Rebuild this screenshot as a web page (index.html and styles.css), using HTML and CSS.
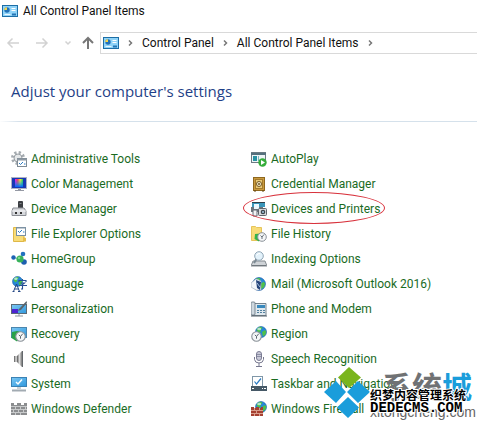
FILE: index.html
```
<!DOCTYPE html>
<html lang="en">
<head>
    <meta charset="utf-8" />
    <title>All Control Panel Items</title>
    <link rel="stylesheet" href="styles.css">
</head>
<body>
    <!--shared shapes-->
    <svg class="defs" aria-hidden="true">
        <defs>
            <linearGradient id="gamut" x1="0" y1="0" x2="1" y2="0">
                <stop offset="0" stop-color="#f0f" /><stop offset=".35" stop-color="#f44" />
                <stop offset=".65" stop-color="#fe3" /><stop offset="1" stop-color="#2c4" />
            </linearGradient>
            <linearGradient id="cool" x1="0" y1="0" x2="0" y2="1">
                <stop offset="0" stop-color="#0bf" stop-opacity="0" /><stop offset="1" stop-color="#06f" />
            </linearGradient>
            <linearGradient id="metal" x1="0" y1="0" x2="1" y2="0">
                <stop offset="0" stop-color="#555" /><stop offset=".5" stop-color="#ddd" /><stop offset="1" stop-color="#777" />
            </linearGradient>
            <linearGradient id="screen" x1="0" y1="0" x2="1" y2="1">
                <stop offset="0" stop-color="#7cc8f4" /><stop offset="1" stop-color="#2f97dc" />
            </linearGradient>
            <symbol id="panel" viewBox="0 0 16 12">
                <rect x=".5" y=".5" width="15" height="11" fill="#8fd3f8" stroke="#1c6ea6" />
                <circle cx="5" cy="5" r="2.7" fill="#2372b8" />
                <path d="M5 5V2.200A2.800 2.800 0 0 0 2.200 5z" fill="#f5d64a" />
                <path d="M9.500 3.500h4M9.500 5.500h4" stroke="#fff" />
                <path d="M2.500 9.500h6" stroke="#e9f8ff" />
                <path d="M10 9.500h4" stroke="#2475b5" stroke-width="2" />
            </symbol>
            <symbol id="globe" viewBox="0 0 12 12">
                <circle cx="6" cy="6" r="5.500" fill="#2687d8" stroke="#1a5da8" stroke-width=".6" />
                <path d="M1.500 4Q3 .8 6 .8L7.500 2 5.500 4 6 5.500 3.500 7zM7 6l3-2 1.200 1.500-.7 3L8 10.500z" fill="#4fc04a" />
                <ellipse cx="4.200" cy="3" rx="2" ry="1.300" fill="#dff5ff" opacity=".7" />
            </symbol>
            <symbol id="clock" viewBox="0 0 10 10">
                <circle cx="5" cy="5" r="4.300" fill="#f4f6f7" stroke="#8b9299" />
                <path d="M5 5l2-2.500M5 5l-1.500-1.500M5 5v2" stroke="#59636c" stroke-width=".9" />
            </symbol>
        </defs>
    </svg>

    <div class="window">
        <header class="titlebar">
            <svg class="panel-icon" aria-hidden="true"><use href="#panel" /></svg>
            <span>All Control Panel Items</span>
        </header>

        <nav class="toolbar" aria-label="Navigation">
            <button class="nav-btn" type="button" aria-label="Back" disabled>
                <svg width="14" height="14" viewBox="0 0 14 14"><path d="M13 7H2M6.500 2.500L2 7l4.500 4.500" /></svg>
            </button>
            <button class="nav-btn" type="button" aria-label="Forward" disabled>
                <svg width="14" height="14" viewBox="0 0 14 14"><path d="M1 7h11M7.500 2.500L12 7l-4.500 4.500" /></svg>
            </button>
            <button class="nav-btn recent" type="button" aria-label="Recent locations" disabled>
                <svg width="8" height="8" viewBox="0 0 8 8"><path d="M1.500 2.500L4 5l2.500-2.500" /></svg>
            </button>
            <button class="nav-btn up" type="button" aria-label="Up">
                <svg width="14" height="14" viewBox="0 0 14 14"><path d="M7 13V2M2 7l5-5 5 5" /></svg>
            </button>
            <div class="address">
                <svg class="panel-icon" aria-hidden="true"><use href="#panel" /></svg>
                <svg class="chevron" viewBox="0 0 5 8"><path d="M1 1.500L3.500 4 1 6.500" /></svg>
                <a href="#">Control Panel</a>
                <svg class="chevron" viewBox="0 0 5 8"><path d="M1 1.500L3.500 4 1 6.500" /></svg>
                <a href="#">All Control Panel Items</a>
                <svg class="chevron" viewBox="0 0 5 8"><path d="M1 1.500L3.500 4 1 6.500" /></svg>
            </div>
        </nav>

        <h1>Adjust your computer's settings</h1>

        <ul class="items">
            <li><a href="#">
                <svg viewBox="0 0 16 16">
                    <circle cx="7" cy="7" r="5.500" fill="none" stroke="#a5abb0" stroke-width="3" stroke-dasharray="2.200 2.120" />
                    <circle cx="7" cy="7" r="4" fill="#e4e7e9" stroke="#9aa0a5" />
                    <rect x="6.500" y="7.500" width="9" height="8" fill="#fff" stroke="#7e8a94" />
                    <path d="M6 8.500h10" stroke="#8d98a2" stroke-width="2" />
                    <path d="M8 12l1.500 1.500L12 11M13 13h1.500" fill="none" stroke="#2b7cc4" />
                </svg>Administrative Tools</a></li>
            <li><a href="#">
                <svg viewBox="0 0 16 16">
                    <rect x=".5" y="1.500" width="14" height="10" fill="#eef5f7" stroke="#6b7a83" />
                    <path d="M0 3h15" stroke="#55707d" stroke-width="2" />
                    <rect x="2" y="5" width="4" height="5" fill="#2a93a4" /><path d="M7.500 5v5" stroke="#7bb6be" />
                    <circle cx="11.500" cy="11.500" r="4.200" fill="#35ad3b" />
                    <path d="M10 9v5l4-2.500z" fill="#fff" />
                </svg>AutoPlay</a></li>
            <li><a href="#">
                <svg viewBox="0 0 16 16">
                    <rect x=".5" y="1.500" width="15" height="11" fill="#1838b4" stroke="#adb1c5" />
                    <rect x="4" y="3" width="8" height="8" fill="url(#gamut)" /><rect x="4" y="3" width="8" height="8" fill="url(#cool)" />
                    <path d="M7 13h3v1h3v1H4v-1h3z" fill="#9599a4" />
                </svg>Color Management</a></li>
            <li><a href="#">
                <svg viewBox="0 0 16 16">
                    <rect x="2.500" y="1.500" width="11" height="13" fill="#c99a3f" stroke="#8f681e" />
                    <rect x="4.500" y="3.500" width="7" height="9" fill="#e7c876" stroke="#a47a2c" />
                    <circle cx="8" cy="8" r="2.500" fill="#f7eed0" stroke="#725722" /><circle cx="8" cy="8" r="1" fill="#725722" />
                    <path d="M3 15h2M11 15h2" stroke="#634713" />
                </svg>Credential Manager</a></li>
            <li><a href="#">
                <svg viewBox="0 0 16 16">
                    <rect x="7" y="0" width="5" height="8" rx="1" fill="#3c3f43" /><path d="M8.500 2.500h2" stroke="#85898d" />
                    <path d="M2 7h11l2 3v4.500H1V10z" fill="#d6d8dc" stroke="#8b8e94" />
                    <path d="M1 10h14" stroke="#f8f8fa" />
                    <rect x="4" y="11" width="2" height="2" fill="#333" /><rect x="9" y="11" width="2" height="2" fill="#333" />
                </svg>Device Manager</a></li>
            <li class="marked"><a href="#">
                <svg viewBox="0 0 16 16">
                    <rect x="1" y="1" width="13" height="5" fill="#3a96ba" /><path d="M1 1.500h13" stroke="#31404a" />
                    <path d="M0 6h12v5H0z" fill="#6c747c" /><path d="M3 3h5v5H3z" fill="#eaf7fd" />
                    <path d="M2 9h4v6H2z" fill="#f1f3f5" stroke="#656d74" />
                    <rect x="7.500" y="7.500" width="8" height="7" rx="1" fill="#d7dadd" stroke="#60666c" />
                    <circle cx="12" cy="11" r="2.300" fill="#3e454c" /><circle cx="12" cy="11" r="1" fill="#a6c9e2" />
                </svg>Devices and Printers</a></li>
            <li><a href="#">
                <svg viewBox="0 0 16 16">
                    <path d="M2.500 15.500v-14h4l1 1h5.500v13z" fill="#f8dc78" stroke="#dfb848" />
                    <path d="M12 11l3 1v3.500h-3z" fill="#e6bd4a" />
                    <rect x="5.500" y="1.500" width="9" height="8" fill="#fff" stroke="#7990a3" />
                    <path d="M5 2h10" stroke="#8295a5" /><path d="M7 5l1.500 1.500L11 4M12 6h1.500" fill="none" stroke="#2b7cc4" />
                </svg>File Explorer Options</a></li>
            <li><a href="#">
                <svg viewBox="0 0 16 16">
                    <path d="M.5 14.500V.5h4l1 1h5v13z" fill="#f8dc78" stroke="#e6c45b" />
                    <path d="M4 8l-.5 5L8 15.500l1.500-2L7 11l3-3.500z" fill="#35b34a" />
                    <svg x="6" y="6" width="10" height="10"><use href="#clock" /></svg>
                </svg>File History</a></li>
            <li><a href="#">
                <svg viewBox="0 0 16 16">
                    <path d="M3 7l8 1M11 3v9" stroke="#7fc2ae" />
                    <circle cx="2.500" cy="6.500" r="2.200" fill="#1e63b4" /><circle cx="12" cy="3" r="2.300" fill="#2270bf" />
                    <circle cx="13" cy="11" r="2.800" fill="#1e5fae" /><circle cx="9" cy="8" r="3.600" fill="#37b25a" />
                    <circle cx="8" cy="7" r="1.300" fill="#80d88c" />
                </svg>HomeGroup</a></li>
            <li><a href="#">
                <svg viewBox="0 0 16 16">
                    <path d="M2 10h12l2 5H0z" fill="#cfd3d7" stroke="#868c92" />
                    <path d="M1 14.500h14" stroke="#70777d" />
                    <path d="M5.500 8L3 12" stroke="#7b8892" stroke-width="2" />
                    <circle cx="8" cy="5" r="4.300" fill="#e3f2fb" stroke="#90a5b5" /><path d="M5.500 4.500Q7 2 9 2.500" fill="none" stroke="#fff" />
                </svg>Indexing Options</a></li>
            <li><a href="#">
                <svg viewBox="0 0 16 16">
                    <svg x="1" y="0" width="11" height="11"><use href="#globe" /></svg>
                    <path d="M8 6V4.500h7V6M11.500 3v1.500M9.500 7h4l-2 1.500V13H10M8 9.500h8" fill="none" stroke="#274f94" stroke-width="1.100" />
                    <path d="M2.500 15.500L5.500 8l3 7.500M3.500 13h4M1.500 15.500h2M7 15.500h2.500" fill="none" stroke="#254785" />
                </svg>Language</a></li>
            <li><a href="#">
                <svg viewBox="0 0 16 16">
                    <svg x="1" y="1" width="14" height="14"><use href="#globe" /></svg>
                    <path d="M0 7l5-4 5 2v9H5L0 11z" fill="#f3f7fb" stroke="#9daaba" stroke-width=".6" />
                    <path d="M5 4l5 2-1 8-3-2z" fill="#25447a" /><path d="M6 7l3 4" stroke="#a6c1df" />
                </svg>Mail (Microsoft Outlook 2016)</a></li>
            <li><a href="#">
                <svg viewBox="0 0 16 16">
                    <rect x=".5" y="3.500" width="15" height="9" fill="url(#screen)" stroke="#5a6a77" />
                    <rect x="1" y="8" width="6" height="4" fill="#4d22d2" />
                    <path d="M15.500 0L9 7l-3 3 4-1 6-7z" fill="#5b646b" />
                    <path d="M4 15h8M8 13v2" stroke="#8d969e" />
                </svg>Personalization</a></li>
            <li><a href="#">
                <svg viewBox="0 0 16 16">
                    <path d="M1 2.500h14v12H1z" fill="#dfe8ee" stroke="#75838e" />
                    <rect x="0" y="1" width="4" height="13" rx="1" fill="#cfd8df" stroke="#66737e" stroke-width=".8" />
                    <path d="M6 4h8v3H6z" fill="#3989bd" />
                    <path d="M6 9.500h8M6 11.500h8" stroke="#53819f" stroke-dasharray="2 1" /><path d="M0 15h16" stroke="#55616b" />
                </svg>Phone and Modem</a></li>
            <li><a href="#">
                <svg viewBox="0 0 16 16">
                    <rect x=".5" y="1.500" width="15" height="10" fill="url(#screen)" stroke="#4b86ae" />
                    <path d="M1 6l-.5 6L6 15.500l2-2L6 10l4-4-4-1z" fill="#29a248" />
                    <svg x="4" y="5" width="11" height="11"><use href="#clock" /></svg>
                </svg>Recovery</a></li>
            <li><a href="#">
                <svg viewBox="0 0 16 16">
                    <svg x="4" y="0" width="12" height="12"><use href="#globe" /></svg>
                    <svg x="0" y="5" width="11" height="11"><use href="#clock" /></svg>
                </svg>Region</a></li>
            <li><a href="#">
                <svg viewBox="0 0 16 16">
                    <rect x="3" y="5" width="4" height="6" fill="url(#metal)" />
                    <path d="M6 5l5-5v16l-5-5z" fill="url(#metal)" />
                    <path d="M11.500 0v16" stroke="#63676b" />
                </svg>Sound</a></li>
            <li><a href="#">
                <svg viewBox="0 0 16 16">
                    <rect x="5.500" y=".5" width="5" height="9" rx="2.500" fill="#c9cad8" stroke="#7b7c94" />
                    <path d="M6 3.500h4M6 5.500h4" stroke="#8d8fa5" />
                    <path d="M3.500 6v2.500Q4 12 8 12t4.500-3.500V6M8 12v3M5 15.500h6" fill="none" stroke="#77788f" />
                </svg>Speech Recognition</a></li>
            <li><a href="#">
                <svg viewBox="0 0 16 16">
                    <rect x=".5" y="1.500" width="15" height="9" fill="url(#screen)" stroke="#3b82b4" />
                    <path d="M5 6l2 2 4-4.500" fill="none" stroke="#fff" stroke-width="1.500" />
                    <path d="M6 12h4" stroke="#9ca6ae" /><path d="M1 14.500h14" stroke="#a2abb2" stroke-width="2" />
                </svg>System</a></li>
            <li><a href="#">
                <svg viewBox="0 0 16 16">
                    <rect x="1.500" y=".5" width="10" height="11" fill="#fff" stroke="#8097a8" />
                    <path d="M3.500 5.500l2 2.500L10 2.500" fill="none" stroke="#2b7cc4" stroke-width="1.200" />
                    <rect x="0" y="10" width="16" height="5" fill="#465967" />
                    <path d="M1 12.500h2M11 12.500h1M13 12.500h2" stroke="#fff" />
                </svg>Taskbar and Navigation</a></li>
            <li><a href="#">
                <svg viewBox="0 0 16 16">
                    <path d="M0 2h3v2h3V2h4v2h3V2h3v12H0z" fill="#8b8d8f" />
                    <path d="M0 5.500h16M0 8.500h16M0 11.500h16M4.500 6v2M9.500 6v2M14.500 6v2M2.500 9v2M7.500 9v2M12.500 9v2M4.500 12v2M9.500 12v2" stroke="#d8d9da" stroke-width=".8" />
                </svg>Windows Defender</a></li>
            <li><a href="#">
                <svg viewBox="0 0 16 16">
                    <svg x="4" y="0" width="12" height="12"><use href="#globe" /></svg>
                    <path d="M0 6h3v1h2V6h3v1h2V6h2v9H0z" fill="#a54031" />
                    <path d="M0 9.500h12M0 12.500h12M3.500 7v2M8.500 7v2M5.500 10v2M3.500 13v2M8.500 13v2" stroke="#e6b5a3" stroke-width=".8" />
                </svg>Windows Firewall</a></li>
        </ul>

        <!--site stamps over the lower right corner-->
        <div class="stamp">
            <svg class="stamp-logo" viewBox="0 0 46 52" aria-hidden="true">
                <path d="M25 0l12 10.500L25 21 14 10.500z" fill="#7ab51d" />
                <path d="M12 14l10 11-10 11L0 25zM34 14l12 11-12 11-11-11zM24 30l11 10.500L24 51 13 40.500z" fill="#1a9ddb" />
            </svg>
            <div class="stamp-text">
                <div class="brand" lang="zh">系统<span>城</span></div>
                <div class="site">xitongcheng.com</div>
                <div class="cms">
                    <div lang="zh">织梦内容管理系统</div>
                    <div class="cms-url">DEDECMS.COM</div>
                </div>
            </div>
        </div>
    </div>
</body>
</html>
```
FILE: styles.css
```
* {
    box-sizing: border-box;
    margin: 0;
    padding: 0;
}

body {
    background-color: #fff;
    color: #111;
    font: 12px/20px Roboto, "Liberation Sans", sans-serif;
}

a {
    color: inherit;
    text-decoration: none;
}

ul {
    list-style: none;
}

.defs {
    position: absolute;
    width: 0;
    height: 0;
}

.window {
    position: relative;
    overflow: hidden;
}

.panel-icon {
    flex: none;
    width: 16px;
    height: 12px;
}

.titlebar {
    display: flex;
    align-items: center;
    gap: 5px;
    height: 32px;
    padding: 0 2px 11px;
}

.toolbar {
    display: flex;
    align-items: center;
    height: 22px;
    padding-left: 6px;
}

.nav-btn {
    display: flex;
    flex: none;
    margin-right: 15px;
    border: 0;
    background: none;
}

    .nav-btn svg {
        fill: none;
        stroke: #d2d2d2;
        stroke-width: 1.5;
    }

    .nav-btn.recent {
        margin-right: 9px;
    }

    .nav-btn.up {
        margin-right: 5px;
    }

        .nav-btn.up svg {
            stroke: #777;
            stroke-width: 2;
        }

.address {
    display: flex;
    flex: 1;
    align-items: center;
    gap: 9px;
    height: 22px;
    padding-left: 2px;
    border: 1px solid #d9d9d9;
    border-right: 0;
    white-space: nowrap;
}

.chevron {
    flex: none;
    width: 5px;
    height: 8px;
    fill: none;
    stroke: #777;
    stroke-width: 1.5;
}

h1 {
    padding: 25px 11px 17px;
    color: #1f3f87;
    font: 15px/25px "Open Sans", "Noto Sans", sans-serif;
    border-bottom: 1px solid;
    border-image: linear-gradient(to right, #fff, #d5e1eb 20px) 1;
}

.items {
    display: grid;
    grid-template-columns: 240px 1fr;
    padding: 24px 0 0 11px;
    color: #1a6b1f;
    white-space: nowrap;
}

    .items li {
        height: 25px;
    }

    .items a {
        display: inline-flex;
        align-items: center;
        gap: 4px;
        height: 25px;
    }

        .items a > svg {
            flex: none;
            width: 16px;
            height: 16px;
        }

    .items .marked {
        position: relative;
    }

        .items .marked::after {
            content: "";
            position: absolute;
            top: -4px;
            left: -8px;
            width: 140px;
            height: 30px;
            border: 1px solid #d8323c;
            border-radius: 50%;
        }

.stamp {
    position: absolute;
    right: 4px;
    bottom: 0;
    display: flex;
    width: 149px;
    height: 54px;
}

.stamp-logo {
    flex: none;
    width: 46px;
    height: 52px;
}

.stamp-text {
    position: relative;
    flex: 1;
    white-space: nowrap;
}

.brand {
    padding-left: 12px;
    color: #707274;
    font: bold 30px/36px "Noto Sans CJK SC", sans-serif;
}

    .brand span {
        color: #1a9ddb;
    }

.site {
    color: #666;
    font: 14px/18px "Liberation Sans", sans-serif;
}

.cms {
    position: absolute;
    top: 20px;
    left: 0;
    color: #000;
    font: bold 12px/15px "Noto Sans CJK SC", sans-serif;
    -webkit-text-stroke: 2px #fff;
    paint-order: stroke fill;
}

.cms-url {
    font: bold 14px/13px "Liberation Mono", monospace;
}
```
